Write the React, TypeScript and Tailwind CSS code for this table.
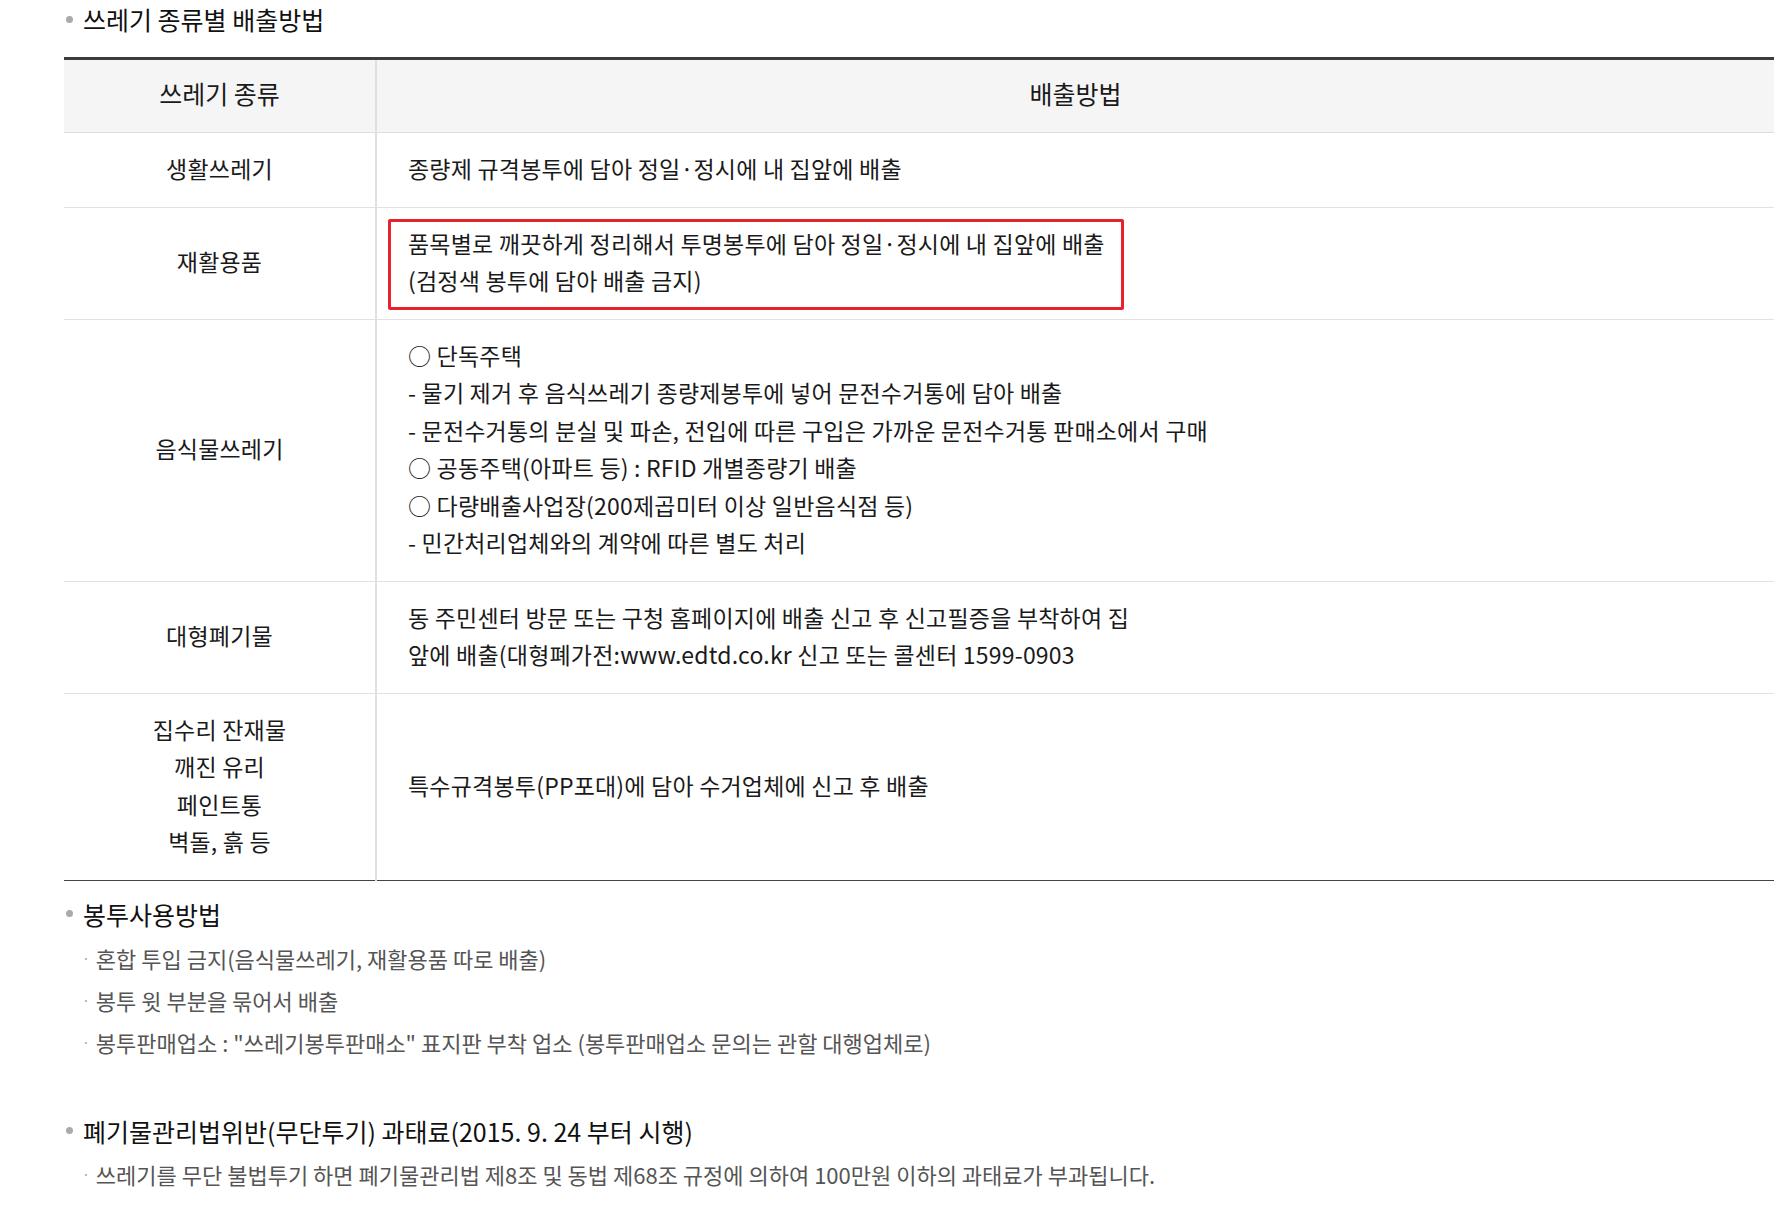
import React from 'react';

const rows: { kind: React.ReactNode; method: React.ReactNode; boxed?: boolean }[] = [
  {
    kind: '생활쓰레기',
    method: <p>종량제 규격봉투에 담아 정일·정시에 내 집앞에 배출</p>,
  },
  {
    kind: '재활용품',
    boxed: true,
    method: (
      <>
        <p>품목별로 깨끗하게 정리해서 투명봉투에 담아 정일·정시에 내 집앞에 배출</p>
        <p>(검정색 봉투에 담아 배출 금지)</p>
      </>
    ),
  },
  {
    kind: '음식물쓰레기',
    method: (
      <>
        <p>○ 단독주택</p>
        <p>- 물기 제거 후 음식쓰레기 종량제봉투에 넣어 문전수거통에 담아 배출</p>
        <p>- 문전수거통의 분실 및 파손, 전입에 따른 구입은 가까운 문전수거통 판매소에서 구매</p>
        <p>○ 공동주택(아파트 등) : RFID 개별종량기 배출</p>
        <p>○ 다량배출사업장(200제곱미터 이상 일반음식점 등)</p>
        <p>- 민간처리업체와의 계약에 따른 별도 처리</p>
      </>
    ),
  },
  {
    kind: '대형폐기물',
    method: (
      <>
        <p>동 주민센터 방문 또는 구청 홈페이지에 배출 신고 후 신고필증을 부착하여 집</p>
        <p>앞에 배출(대형폐가전:www.edtd.co.kr 신고 또는 콜센터 1599-0903</p>
      </>
    ),
  },
  {
    kind: (
      <>
        <p>집수리 잔재물</p>
        <p>깨진 유리</p>
        <p>페인트통</p>
        <p>벽돌, 흙 등</p>
      </>
    ),
    method: <p>특수규격봉투(PP포대)에 담아 수거업체에 신고 후 배출</p>,
  },
];

function Heading({ children }: { children: React.ReactNode }) {
  return (
    <h3 className="flex items-center text-[25px] leading-[32px] text-[#111]">
      <span className="w-[7px] h-[7px] rounded-full bg-[#aaa] ml-[2px] mr-[10px]" />
      {children}
    </h3>
  );
}

function Item({ children }: { children: React.ReactNode }) {
  return (
    <li className="flex items-center text-[22px] leading-[30px] text-[#555]">
      <span className="text-[#aaa] text-[14px] ml-[18px] mr-[6px]">·</span>
      {children}
    </li>
  );
}

export default function App() {
  return (
    <div className="min-h-screen bg-white font-['Noto_Sans_CJK_KR','Noto_Sans',sans-serif] text-[#1a1a1a]">
      <div className="pl-[64px] pr-[12px] pt-[3px]">
        <Heading>쓰레기 종류별 배출방법</Heading>

        <table className="mt-[22px] w-full border-collapse border-t-[3px] border-t-[#3c3c3c] border-b border-b-[#444]">
          <colgroup>
            <col className="w-[312px]" />
            <col />
          </colgroup>
          <thead>
            <tr className="bg-[#f5f5f5] text-[25px] leading-[32px]">
              <th className="h-[74px] pb-[7px] font-normal border-r-2 border-r-[#e0e0e0] border-b border-b-[#dedede]">
                쓰레기 종류
              </th>
              <th className="h-[74px] pb-[7px] font-normal border-b border-b-[#dedede]">배출방법</th>
            </tr>
          </thead>
          <tbody className="text-[23px] leading-[37.5px] tracking-[0.2px]">
            {rows.map((row, i) => (
              <tr key={i} className={i < rows.length - 1 ? 'border-b border-b-[#e2e2e2]' : ''}>
                <td className="pt-[17px] pb-[19px] text-center align-middle border-r-2 border-r-[#e0e0e0]">
                  {row.kind}
                </td>
                <td className="pt-[17px] pb-[19px] pl-[31px] align-middle">
                  {row.boxed ? (
                    <div className="relative w-fit">
                      <div className="absolute -left-[20px] -right-[19px] -top-[6px] -bottom-[10px] border-[3px] border-[#e8222d] rounded-[2px]" />
                      {row.method}
                    </div>
                  ) : (
                    row.method
                  )}
                </td>
              </tr>
            ))}
          </tbody>
        </table>

        <div className="mt-[17px]">
          <Heading>봉투사용방법</Heading>
          <ul className="mt-[13px] flex flex-col gap-[12px]">
            <Item>혼합 투입 금지(음식물쓰레기, 재활용품 따로 배출)</Item>
            <Item>봉투 윗 부분을 묶어서 배출</Item>
            <Item>봉투판매업소 : "쓰레기봉투판매소" 표지판 부착 업소 (봉투판매업소 문의는 관할 대행업체로)</Item>
          </ul>
        </div>

        <div className="mt-[58px]">
          <Heading>폐기물관리법위반(무단투기) 과태료(2015. 9. 24 부터 시행)</Heading>
          <ul className="mt-[12px]">
            <Item>쓰레기를 무단 불법투기 하면 폐기물관리법 제8조 및 동법 제68조 규정에 의하여 100만원 이하의 과태료가 부과됩니다.</Item>
          </ul>
        </div>
      </div>
    </div>
  );
}
